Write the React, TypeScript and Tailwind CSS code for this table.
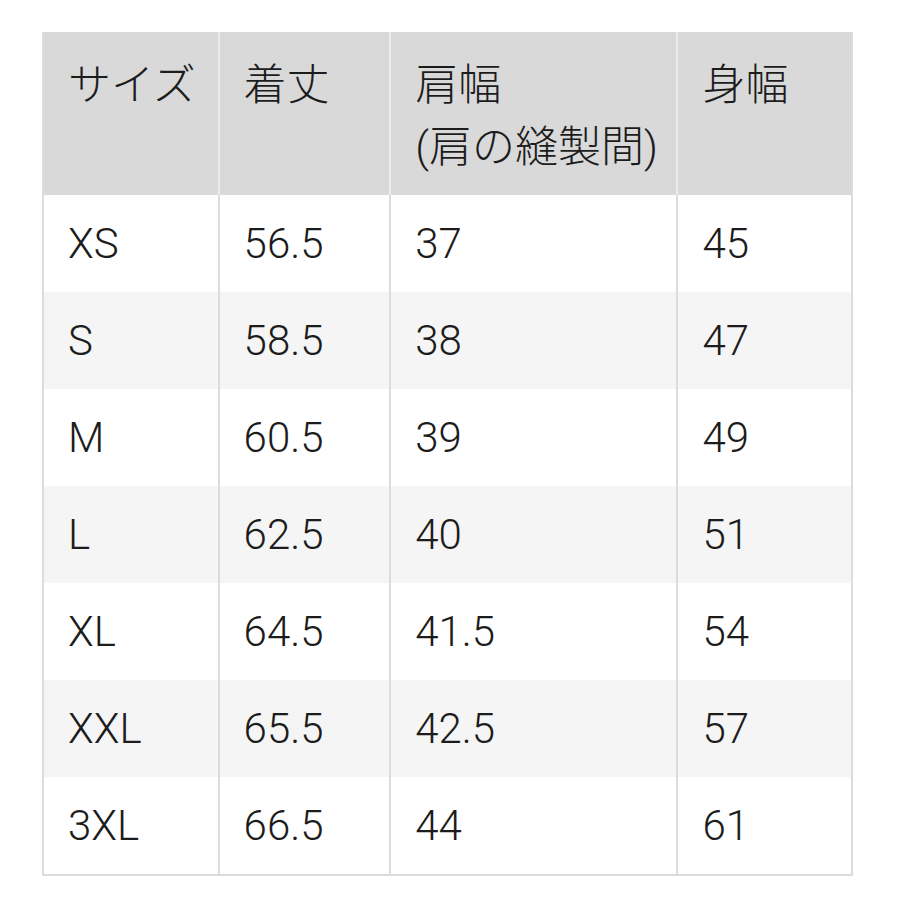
import React from "react";

const rows: [string, string, string, string][] = [
  ["XS", "56.5", "37", "45"],
  ["S", "58.5", "38", "47"],
  ["M", "60.5", "39", "49"],
  ["L", "62.5", "40", "51"],
  ["XL", "64.5", "41.5", "54"],
  ["XXL", "65.5", "42.5", "57"],
  ["3XL", "66.5", "44", "61"],
];

const widths = ["w-[176px]", "w-[172px]", "w-[288px]", "w-[175px]"];

export default function App() {
  return (
    <div
      className="w-[900px] h-[900px] bg-white pt-[32px] pl-[42px] text-[#1c1c1c] font-light"
      style={{ fontFamily: 'Roboto, "Noto Sans CJK JP", sans-serif' }}
    >
      <div className="w-[811px] border-l-2 border-b-2 border-[#dcdcdc] flex flex-col">
        <div className="flex h-[163px] bg-[#d9d9d9]">
          {["サイズ", "着丈", "肩幅\n(肩の縫製間)", "身幅"].map((h, i) => (
            <div
              key={i}
              className={`${widths[i]} border-r-2 border-[#ececec] last:border-[#dcdcdc] pl-[24px] pt-[22px] text-[43px] leading-[62px] whitespace-pre`}
            >
              {h}
            </div>
          ))}
        </div>
        {rows.map((r, ri) => (
          <div
            key={ri}
            className={`flex h-[97px] ${ri % 2 === 1 ? "bg-[#f5f5f5]" : "bg-white"}`}
          >
            {r.map((c, ci) => (
              <div
                key={ci}
                className={`${widths[ci]} border-r-2 border-[#dcdcdc] pl-[24px] flex items-center text-[42px]`}
              >
                {c}
              </div>
            ))}
          </div>
        ))}
      </div>
    </div>
  );
}
